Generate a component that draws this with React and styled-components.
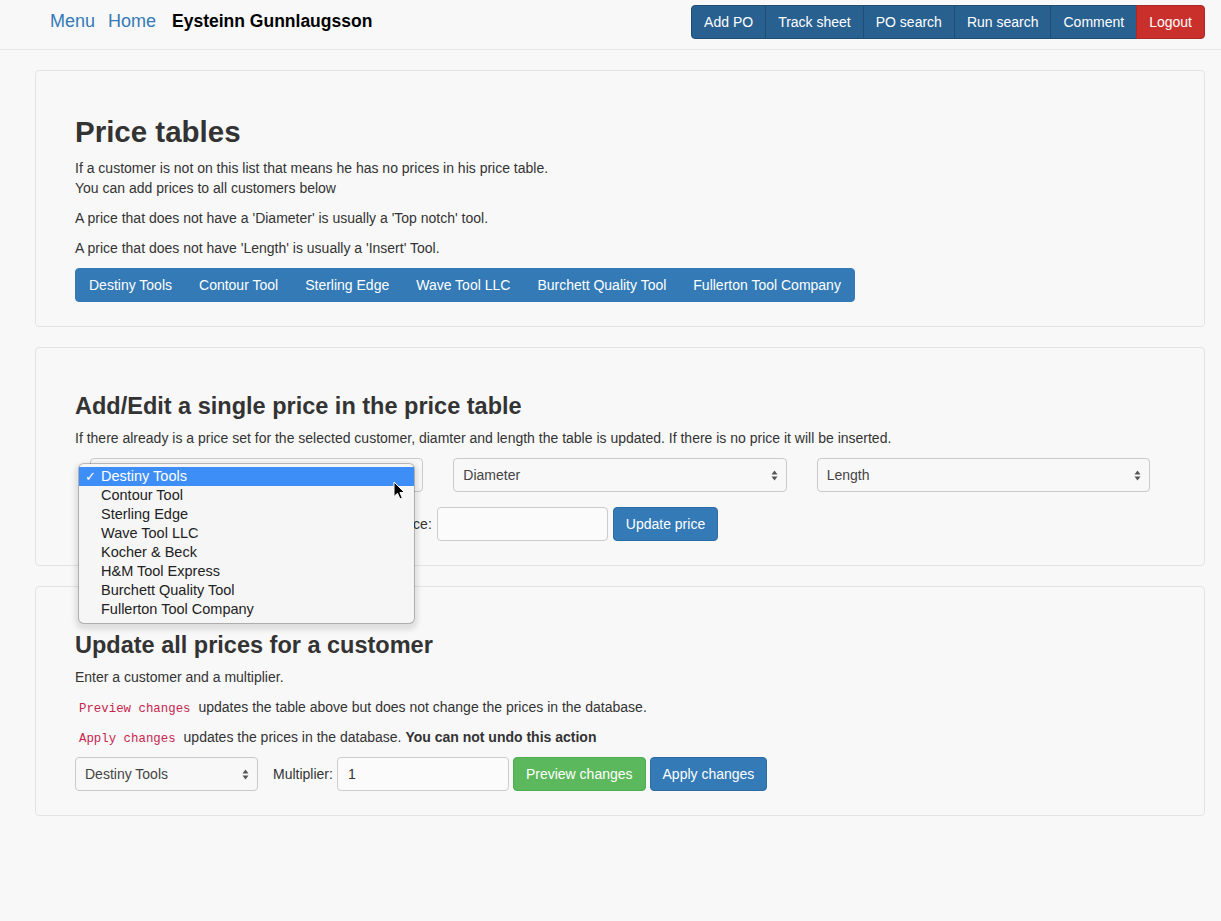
import React from "react";
import styled, { createGlobalStyle } from "styled-components";

const Global = createGlobalStyle`
  html, body { margin: 0; padding: 0; background: #f8f8f8; }
  body {
    font-family: "Liberation Sans", Helvetica, Arial, sans-serif;
    font-size: 14px;
    line-height: 20px;
    color: #333;
  }
  * { box-sizing: border-box; }
`;

const Navbar = styled.header`
  height: 50px;
  border-bottom: 1px solid #e7e7e7;
  background: #f8f8f8;
`;

const NavInner = styled.div`
  width: 1170px;
  margin-left: 35px;
  display: flex;
  justify-content: space-between;
  align-items: flex-start;
`;

const NavLeft = styled.div`
  display: flex;
  align-items: center;
  padding: 11px 0 0 15px;
  line-height: 20px;
`;

const NavLink = styled.a`
  font-size: 18px;
  color: #337ab7;
  text-decoration: none;
  margin-right: ${(p) => p.$gap}px;
`;

const UserName = styled.span`
  font-size: 17.5px;
  font-weight: 700;
  color: #000;
`;

const BtnGroup = styled.div`
  display: flex;
  margin-top: ${(p) => p.$mt || 0}px;
  margin-left: ${(p) => p.$ml || 0}px;
  & > button { border-radius: 0; }
  & > button:first-child { border-radius: 4px 0 0 4px; }
  & > button:last-child { border-radius: 0 4px 4px 0; }
  & > button + button { margin-left: -1px; }
`;

const variants = {
  navy: { bg: "#286090", border: "#204d74" },
  danger: { bg: "#c9302c", border: "#ac2925" },
  primary: { bg: "#337ab7", border: "#2e6da4" },
  flat: { bg: "#337ab7", border: "#337ab7" },
  success: { bg: "#5cb85c", border: "#4cae4c" },
};

const Button = styled.button`
  font-family: "Liberation Sans", Helvetica, Arial, sans-serif;
  font-size: 14px;
  line-height: 20px;
  height: 34px;
  padding: 6px ${(p) => p.$px || 12}px;
  color: #fff;
  background: ${(p) => variants[p.$v].bg};
  border: 1px solid ${(p) => variants[p.$v].border};
  border-radius: 4px;
  white-space: nowrap;
  cursor: pointer;
`;

const Page = styled.main`
  width: 1170px;
  margin-left: 35px;
  padding-top: 20px;
  padding-bottom: 40px;
`;

const Well = styled.section`
  background: #f8f8f8;
  border: 1px solid #e4e4e4;
  border-radius: 4px;
  padding: ${(p) => p.$pt}px 39px ${(p) => p.$pb}px 39px;
  margin-bottom: 20px;
`;

const Title = styled.h2`
  margin: 0 0 10px;
  font-size: 29.5px;
  line-height: 33px;
  font-weight: 700;
  color: #333;
`;

const SubTitle = styled.h3`
  margin: 0 0 9px;
  font-size: 23.5px;
  line-height: 26px;
  font-weight: 700;
  color: #333;
`;

const Para = styled.p`
  margin: 0 0 10px;
`;

const Code = styled.code`
  font-family: "Liberation Mono", "DejaVu Sans Mono", monospace;
  font-size: 12.4px;
  line-height: 14px;
  color: #c7254e;
  padding: 2px 4px;
`;

const Columns = styled.div`
  display: grid;
  grid-template-columns: repeat(3, 1fr);
  margin-bottom: 15px;
`;

const Col = styled.div`
  padding: 0 15px;
  position: relative;
`;

const SelectBox = styled.div`
  height: 34px;
  width: ${(p) => (p.$w ? `${p.$w}px` : "100%")};
  border: 1px solid #cacaca;
  border-radius: 4px;
  background: #f8f8f8;
  display: flex;
  align-items: center;
  justify-content: space-between;
  padding: 0 8px 0 9px;
  color: #444;
  font-size: 14px;
`;

const Arrows = () => (
  <svg width="7" height="11" viewBox="0 0 7 11">
    <path d="M3.5 0.5 L6.5 4.5 L0.5 4.5 Z" fill="#555" />
    <path d="M3.5 10.5 L6.5 6.5 L0.5 6.5 Z" fill="#555" />
  </svg>
);

const Select = ({ children, w }) => (
  <SelectBox $w={w}>
    <span>{children}</span>
    <Arrows />
  </SelectBox>
);

const FormRow = styled.div`
  display: flex;
  align-items: center;
  gap: ${(p) => p.$gap}px;
  margin-left: ${(p) => p.$ml || 0}px;
`;

const Label = styled.label`
  font-size: 14px;
  color: #333;
  margin-right: ${(p) => p.$mr || 0}px;
  margin-left: ${(p) => p.$ml || 0}px;
`;

const Input = styled.div`
  height: 34px;
  width: ${(p) => p.$w}px;
  border: 1px solid #cccccc;
  border-radius: 4px;
  background: #fbfbfb;
  padding: 6px 10px;
  font-size: 14px;
  color: #333;
`;

const Popup = styled.div`
  position: absolute;
  left: 4px;
  top: 6px;
  width: 335px;
  background: #f6f6f6;
  border-radius: 5px;
  padding: 3px 0 4px;
  box-shadow: 0 0 0 1px rgba(0, 0, 0, 0.22), 0 3px 5px 4px rgba(0, 0, 0, 0.1);
  z-index: 10;
  font-family: "Liberation Sans", "DejaVu Sans", sans-serif;
  font-size: 14.5px;
`;

const Option = styled.div`
  height: 19px;
  line-height: 19px;
  display: flex;
  color: ${(p) => (p.$active ? "#fff" : "#222")};
  background: ${(p) => (p.$active ? "#3d8ef7" : "transparent")};
`;

const Check = styled.span`
  width: 22px;
  padding-left: 6px;
  font-family: "DejaVu Sans", sans-serif;
  font-size: 13px;
  font-weight: 700;
`;

const Cursor = styled.svg`
  position: absolute;
  left: 314px;
  top: 17px;
`;

const customers = [
  "Destiny Tools",
  "Contour Tool",
  "Sterling Edge",
  "Wave Tool LLC",
  "Kocher & Beck",
  "H&M Tool Express",
  "Burchett Quality Tool",
  "Fullerton Tool Company",
];

const priceCustomers = [
  "Destiny Tools",
  "Contour Tool",
  "Sterling Edge",
  "Wave Tool LLC",
  "Burchett Quality Tool",
  "Fullerton Tool Company",
];

export default function App() {
  return (
    <>
      <Global />
      <Navbar>
        <NavInner>
          <NavLeft>
            <NavLink href="#" $gap={13}>Menu</NavLink>
            <NavLink href="#" $gap={16}>Home</NavLink>
            <UserName>Eysteinn Gunnlaugsson</UserName>
          </NavLeft>
          <BtnGroup $mt={5}>
            <Button $v="navy">Add PO</Button>
            <Button $v="navy">Track sheet</Button>
            <Button $v="navy">PO search</Button>
            <Button $v="navy">Run search</Button>
            <Button $v="navy">Comment</Button>
            <Button $v="danger">Logout</Button>
          </BtnGroup>
        </NavInner>
      </Navbar>

      <Page>
        <Well $pt={44} $pb={24}>
          <Title>Price tables</Title>
          <Para>
            If a customer is not on this list that means he has no prices in his price table.
            <br />
            You can add prices to all customers below
          </Para>
          <Para>A price that does not have a 'Diameter' is usually a 'Top notch' tool.</Para>
          <Para>A price that does not have 'Length' is usually a 'Insert' Tool.</Para>
          <BtnGroup>
            {priceCustomers.map((c) => (
              <Button key={c} $v="flat" $px={13}>{c}</Button>
            ))}
          </BtnGroup>
        </Well>

        <Well $pt={45} $pb={24}>
          <SubTitle>Add/Edit a single price in the price table</SubTitle>
          <Para>
            If there already is a price set for the selected customer, diamter and length the table is
            updated. If there is no price it will be inserted.
          </Para>
          <Columns>
            <Col>
              <Select>Destiny Tools</Select>
              <Popup>
                {customers.map((c, i) => (
                  <Option key={c} $active={i === 0}>
                    <Check>{i === 0 ? "✓" : ""}</Check>
                    {c}
                  </Option>
                ))}
                <Cursor width="13" height="20" viewBox="0 0 13 20">
                  <path
                    d="M1 1 L1 15.5 L4.5 12.3 L7 18 L9.3 17 L6.9 11.5 L11.5 11.5 Z"
                    fill="#000"
                    stroke="#fff"
                    strokeWidth="1"
                    strokeLinejoin="round"
                  />
                </Cursor>
              </Popup>
            </Col>
            <Col>
              <Select>Diameter</Select>
            </Col>
            <Col>
              <Select>Length</Select>
            </Col>
          </Columns>
          <FormRow $gap={5} $ml={321}>
            <Label>Price:</Label>
            <Input $w={171} />
            <Button $v="primary">Update price</Button>
          </FormRow>
        </Well>

        <Well $pt={45} $pb={24}>
          <SubTitle>Update all prices for a customer</SubTitle>
          <Para>Enter a customer and a multiplier.</Para>
          <Para>
            <Code>Preview changes</Code> updates the table above but does not change the prices in the
            database.
          </Para>
          <Para>
            <Code>Apply changes</Code> updates the prices in the database.{" "}
            <b>You can not undo this action</b>
          </Para>
          <FormRow $gap={4}>
            <Select w={183}>Destiny Tools</Select>
            <Label $ml={11}>Multiplier:</Label>
            <Input $w={172}>1</Input>
            <Button $v="success">Preview changes</Button>
            <Button $v="primary">Apply changes</Button>
          </FormRow>
        </Well>
      </Page>
    </>
  );
}
